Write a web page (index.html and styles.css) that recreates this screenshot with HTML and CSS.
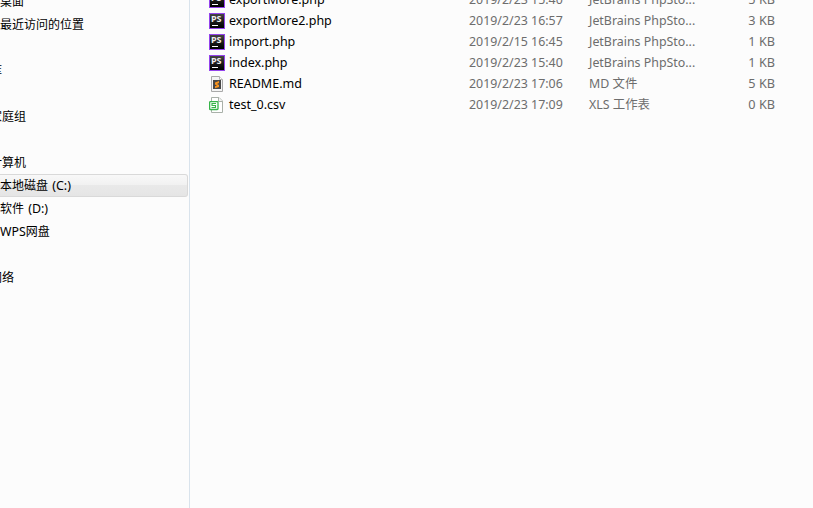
FILE: index.html
```
<!DOCTYPE html>
<html lang="zh-CN">
<head>
<meta charset="utf-8">
<title>本地磁盘 (C:)</title>
<link rel="stylesheet" href="styles.css">
</head>
<body>
<div class="explorer">
  <nav class="sidebar">
    <div class="node">桌面</div>
    <div class="node">最近访问的位置</div>
    <div class="node root group">库</div>
    <div class="node root group">家庭组</div>
    <div class="node root group">计算机</div>
    <div class="node selected">本地磁盘 <span class="drive">(C:)</span></div>
    <div class="node">软件 <span class="drive">(D:)</span></div>
    <div class="node"><span class="wps">WPS</span>网盘</div>
    <div class="node root group">网络</div>
  </nav>
  <main class="files">
    <div class="row"><span class="icon ps">PS</span><span class="name">exportMore.php</span><span class="date">2019/2/23 15:40</span><span class="type">JetBrains PhpSto...</span><span class="size">5 KB</span></div>
    <div class="row"><span class="icon ps">PS</span><span class="name">exportMore2.php</span><span class="date">2019/2/23 16:57</span><span class="type">JetBrains PhpSto...</span><span class="size">3 KB</span></div>
    <div class="row"><span class="icon ps">PS</span><span class="name">import.php</span><span class="date">2019/2/15 16:45</span><span class="type">JetBrains PhpSto...</span><span class="size">1 KB</span></div>
    <div class="row"><span class="icon ps">PS</span><span class="name">index.php</span><span class="date">2019/2/23 15:40</span><span class="type">JetBrains PhpSto...</span><span class="size">1 KB</span></div>
    <div class="row">
      <svg class="icon" viewBox="0 0 16 16"><path d="M2.5.5h8l3 3v12h-11z" fill="#f4f4f4" stroke="#a9a9a9"/><path d="M10.5.5v3h3" fill="#fff" stroke="#b5b5b5"/><rect x="4" y="4" width="8" height="9" fill="#484848"/><path d="M10 5v2L8 8l2 1v2l-4 1.300v-2L8 9.500 6 8.400v-2z" fill="#f8931d"/></svg>
      <span class="name">README.md</span><span class="date">2019/2/23 17:06</span><span class="type">MD 文件</span><span class="size">5 KB</span></div>
    <div class="row">
      <svg class="icon" viewBox="0 0 16 16"><path d="M2.5.5h7.500l3.500 3.500v11.500h-11z" fill="#fff" stroke="#a9b0a9"/><path d="M9.500.5v4h4" fill="#f4f4f4" stroke="#a9b0a9"/><rect x=".6" y="4.600" width="8.400" height="7.900" rx=".8" fill="#fff" stroke="#36b449" stroke-width="1.300"/><path d="M7 6.500H3v2h3.500v2H2.500" fill="none" stroke="#36b449" stroke-width="1.100"/></svg>
      <span class="name">test_0.csv</span><span class="date">2019/2/23 17:09</span><span class="type">XLS 工作表</span><span class="size">0 KB</span></div>
  </main>
</div>
</body>
</html>
```

FILE: styles.css
```
* { box-sizing: border-box; }

body {
  margin: 0;
  background: #fcfcfc;
  color: #000;
  font: 12px/21px "Noto Sans", "Noto Sans CJK SC", sans-serif;
}

.explorer {
  display: flex;
  height: 508px;
  overflow: hidden;
}

.sidebar {
  width: 190px;
  flex: none;
  margin-top: -10px;
  border-right: 1px solid #d9e3ec;
  overflow: hidden;
}

.node {
  height: 23px;
  width: 188px;
  line-height: 22px;
  border: 1px solid transparent;
  border-left: 0;
  white-space: pre;
}

.root { text-indent: -10px; }
.group { margin-top: 23px; }
.drive { font-size: 12.5px; margin-left: 1px; }
.wps { font-size: 12.4px; }

.selected {
  border-color: #d9d9d9;
  border-radius: 0 3px 3px 0;
  background: linear-gradient(#f8f8f8 0%, #f1f1f1 50%, #e9e9e9 50%, #e5e5e5 100%);
}

.files {
  flex: 1;
  margin-top: -11px;
  padding-left: 19px;
}

.row {
  display: grid;
  grid-template-columns: 20px 240px 120px 106px 80px;
  align-items: center;
  height: 21px;
  white-space: nowrap;
  font-size: 12.4px;
  color: #6d6d6d;
}

.name { color: #000; font-size: 12.5px; }
.size { text-align: right; font-size: 12.7px; }

.icon {
  width: 16px;
  height: 16px;
  display: block;
}

.ps {
  position: relative;
  border: 1px solid #9443ec;
  background: linear-gradient(#454545, #151515 60%, #000);
  color: #eee;
  font: bold 9px/10px "Noto Sans", sans-serif;
  padding-left: 1px;
}

.ps::after {
  content: "";
  position: absolute;
  left: 2px;
  bottom: 2px;
  width: 6px;
  height: 1px;
  background: #fff;
}
```
